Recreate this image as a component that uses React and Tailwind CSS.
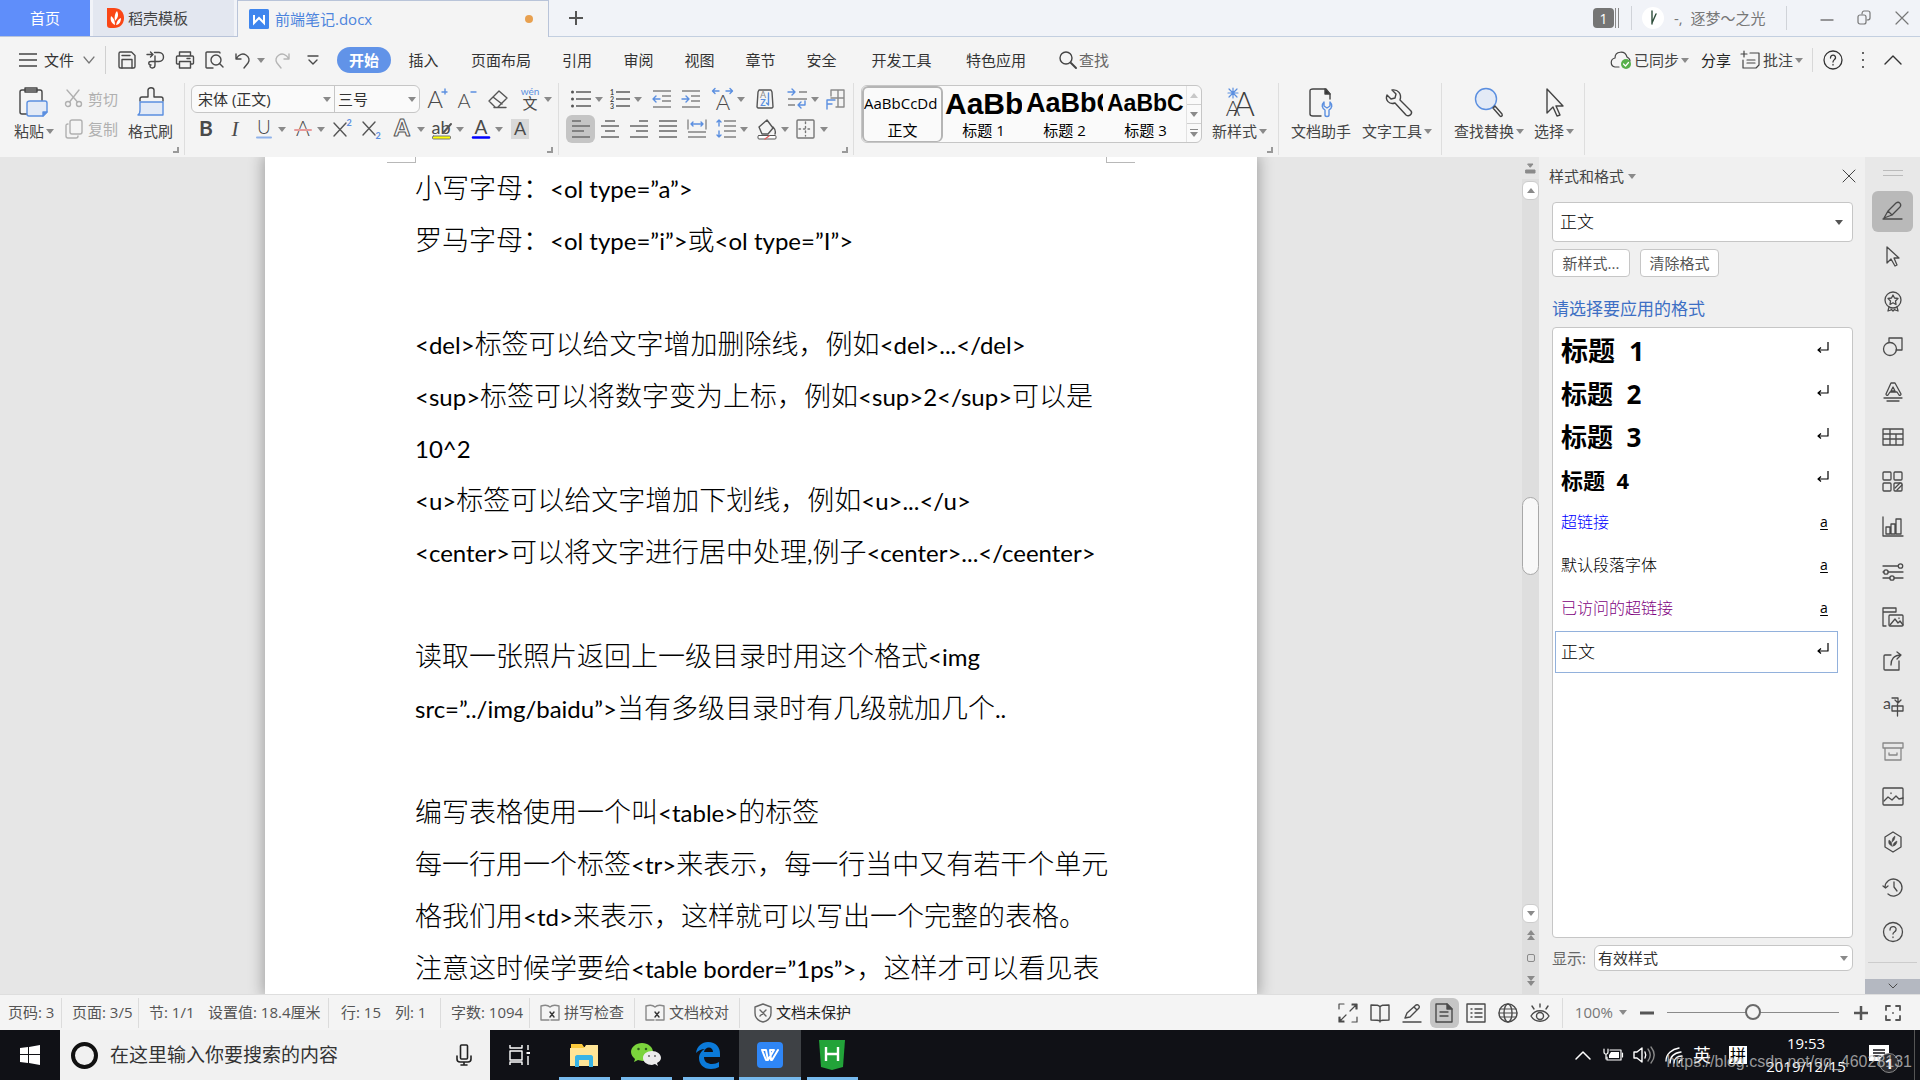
import React from "react";

/* ---------- drawing helpers ---------- */

function Svg({ w = 22, h = 22, sw = 1.4, children, className = "" }) {
  return (
    <svg
      width={w}
      height={h}
      viewBox={`0 0 ${w} ${h}`}
      fill="none"
      stroke="currentColor"
      strokeWidth={sw}
      strokeLinecap="round"
      strokeLinejoin="round"
      className={"shrink-0 overflow-visible " + className}
      aria-hidden="true"
    >
      {children}
    </svg>
  );
}

function Caret({ className = "text-[#8a8a8a]" }) {
  return (
    <svg width="8" height="5" viewBox="0 0 8 5" className={"shrink-0 " + className} aria-hidden="true">
      <path d="M0 0h8L4 5z" fill="currentColor" />
    </svg>
  );
}

const BLUE = "#5b8fe0";
const GREY = "#8a8a8a";

function Letter({ x, y, size, children, fill = "#4a4a4a", weight = 300, font = "Lato", ...rest }) {
  return (
    <text x={x} y={y} fontSize={size} fill={fill} fontWeight={weight} fontFamily={`${font}, sans-serif`} textAnchor="middle" stroke="none" {...rest}>
      {children}
    </text>
  );
}

function Lines({ rows, color = GREY }) {
  return rows.map(([x1, x2, y]) => <path key={y} d={`M${x1} ${y}H${x2}`} stroke={color} strokeWidth="1.6" strokeLinecap="butt" />);
}

/* ---------- title bar ---------- */

function TitleBar() {
  return (
    <header className="flex h-[37px] shrink-0 bg-[#f1f3f8] text-[15px]">
      <button className="w-[90px] border-b border-[#b9c4d9] bg-[#5f8efa] text-white">首页</button>
      <div className="w-[3px] border-b border-[#b9c4d9]" />
      <button className="flex w-[141px] items-center gap-1 border-b border-[#b9c4d9] bg-[#e3e7f0] pl-3.5 text-[#444]">
        <Svg w={17} h={24} className="text-white">
          <path d="M0 2h7c6 0 10 4 10 10s-4 10-10 10H3c-2 0-3-1-3-3z" fill="#fa4616" stroke="none" />
          <path d="M8 19c-4-2-5-5-4-9 3 2 4 5 4 9zM8 15c-1-4 0-8 2-10 2 4 1 7-2 10zM9 19c1-4 2-6 5-7 0 4-2 7-5 7z" fill="#fff" stroke="none" />
        </Svg>
        稻壳模板
      </button>
      <div className="w-[3px] border-b border-[#b9c4d9]" />
      <button className="flex w-[312px] items-center gap-1.5 border-x border-t border-[#b9c4d9] bg-[#f4f4f4] pl-[11px] pr-[15px] text-[#4d84dd]">
        <Svg w={20} h={24} sw={2} className="text-white">
          <rect x="0" y="2" width="20" height="20" rx="1.5" fill="#3f86ee" stroke="none" />
          <path d="M5 8v8l5-5 5 5V8" strokeLinejoin="miter" strokeLinecap="butt" />
        </Svg>
        <span className="flex-1 text-left">前端笔记.docx</span>
        <span className="size-2 rounded-full bg-[#e8a04f]" />
      </button>
      <div className="flex flex-1 items-center border-b border-[#c3cfe0] text-[#777]">
        <button className="ml-5" aria-label="新建标签">
          <Svg w={14} h={14} sw={2} className="text-[#555]">
            <path d="M7 0v14M0 7h14" strokeLinecap="butt" />
          </Svg>
        </button>
        <div className="flex-1" />
        <span className="flex h-5 w-[21px] items-center justify-center rounded-sm bg-[#757575] text-[14px] text-white">1</span>
        <span className="ml-px h-5 w-1 border-x border-[#888]" />
        <span className="ml-3 h-6 w-px bg-[#d0d3d9]" />
        <span className="ml-2.5 flex size-[22px] items-center justify-center rounded-full bg-white">
          <Svg w={10} h={14} className="text-[#2d4d3a]">
            <path d="M4 0v13M4 12l4-9" />
          </Svg>
        </span>
        <span className="ml-2.5 w-[106px] whitespace-pre">-,&nbsp; 逐梦～之光</span>
        <span className="ml-1.5 h-6 w-px bg-[#d0d3d9]" />
        <button className="ml-[33px]" aria-label="最小化">
          <Svg w={14} h={14}><path d="M1 9h12" /></Svg>
        </button>
        <button className="ml-[23px]" aria-label="还原">
          <Svg w={14} h={16} sw={1.2}>
            <rect x="1" y="5" width="8" height="9" rx="2" />
            <path d="M5 4c0-2 1-3 2-3h4c1 0 2 1 2 2v5c0 2-1 2-3 2" />
          </Svg>
        </button>
        <button className="ml-6 mr-[11px]" aria-label="关闭">
          <Svg w={14} h={14} sw={1.2}><path d="M1 1l12 12M13 1L1 13" /></Svg>
        </button>
      </div>
    </header>
  );
}

/* ---------- menu row ---------- */

const menus = [
  ["插入", "w-[65px]"],
  ["页面布局", "w-[90px]"],
  ["引用", "w-[62px]"],
  ["审阅", "w-[61px]"],
  ["视图", "w-[61px]"],
  ["章节", "w-[61px]"],
  ["安全", "w-[61px]"],
  ["开发工具", "w-[99px]"],
  ["特色应用", "w-[90px]"],
];

function MenuRow() {
  return (
    <nav className="flex h-[46px] shrink-0 items-center text-[15px] text-[#333]">
      <button className="ml-[19px] flex items-center gap-[7px]">
        <Svg w={18} h={16} className="text-[#444]"><path d="M0 2h18M0 8h18M0 14h18" strokeLinecap="butt" /></Svg>
        文件
        <Svg w={12} h={8} sw={1.2} className="ml-0.5 text-[#777]"><path d="M1 1l5 6 5-6" /></Svg>
      </button>
      <span className="ml-2.5 h-7 w-px bg-[#d0d0d0]" />
      <div className="ml-1.5 flex items-center text-[#4a4a4a]">
        <button className="flex w-[29px] justify-center" aria-label="保存">
          <Svg w={20} h={20}>
            <path d="M2 3.500c0-1 .5-1.500 1.500-1.500h11L18 5.500v11c0 1-.5 1.500-1.500 1.500h-13C2.500 18 2 17.500 2 16.500z" />
            <path d="M5 18v-8.500h10V18M5 5.500h8" />
          </Svg>
        </button>
        <button className="flex w-[29px] justify-center" aria-label="输出为PDF">
          <Svg w={20} h={20}>
            <path d="M1 4.500h6M4.500 2L7 4.500 4.500 7M8.500 2.500H13c6 0 6 9 0 9H5c-3 0-3 3.500 0 3.500M9 6v9c0 4-5 3.500-5 1" />
          </Svg>
        </button>
        <button className="flex w-[29px] justify-center" aria-label="打印">
          <Svg w={20} h={20}>
            <path d="M4.500 6V2h11v4M4.500 14H2.500c-1 0-1-.5-1-1V7c0-1 .5-1 1-1h15c1 0 1 .5 1 1v6c0 .5 0 1-1 1h-2M4.500 11.500h11v6.500h-11zM12 8.500h3" />
          </Svg>
        </button>
        <button className="flex w-[29px] justify-center" aria-label="打印预览">
          <Svg w={20} h={20}>
            <path d="M9 18H3c-1 0-1-.5-1-1V3c0-.5.5-1 1-1h12c.5 0 1 .5 1 1" />
            <circle cx="12" cy="10" r="5" />
            <path d="M15.500 13.500L19 17" />
          </Svg>
        </button>
        <button className="flex w-[29px] justify-center" aria-label="撤销">
          <Svg w={20} h={20}><path d="M3 4v5h5M3 9c3-5 7-6 10-4s4 5 2 8l-4 5" /></Svg>
        </button>
        <button className="flex w-2.5" aria-label="撤销列表"><Caret /></button>
        <button className="flex w-[29px] justify-center text-[#b5b5b5]" aria-label="恢复">
          <Svg w={20} h={20}><path d="M17 4v5h-5M17 9c-3-5-7-6-10-4S3 10 5 13l4 5" /></Svg>
        </button>
        <button className="ml-0.5 flex w-[29px] justify-center" aria-label="自定义快速访问">
          <Svg w={12} h={12}><path d="M1 2h10M2 6l4 4 4-4" /></Svg>
        </button>
      </div>
      <button className="ml-2.5 h-[26px] w-[54px] rounded-full bg-[#6193e8] font-bold text-white">开始</button>
      {menus.map(([name, w]) => (
        <button key={name} className={"text-center " + w}>{name}</button>
      ))}
      <button className="ml-[18px] flex items-center gap-0.5 text-[#666]">
        <Svg w={18} h={20} className="text-[#444]"><circle cx="7" cy="8" r="6" /><path d="M12 13l5 5" strokeWidth="2" /></Svg>
        查找
      </button>
      <div className="flex-1" />
      <button className="flex items-center gap-0.5 text-[#444]">
        <Svg w={22} h={20} sw={1.2}>
          <path d="M9 17H5c-5-1-5-8 0-9 0-7 10-8 12-1 2 1 3 2 3 4" />
          <circle cx="16" cy="14" r="5" fill="#57b04a" stroke="none" />
          <path d="M13.500 14l2 2 3-3.500" stroke="#fff" />
        </Svg>
        已同步 <Caret />
      </button>
      <button className="ml-3 text-[#222]">分享</button>
      <button className="ml-2.5 mr-0.5 flex items-center gap-0.5 text-[#444]">
        <Svg w={20} h={20} sw={1.2}>
          <path d="M3 1v6M0 4h6M9 3h9v12l-3 3H2V10M6 10h8M6 13h8" />
        </Svg>
        批注 <Caret />
      </button>
      <span className="ml-[7px] h-6 w-px bg-[#d8d8d8]" />
      <button className="ml-2.5" aria-label="帮助">
        <Svg w={20} h={20} sw={1.300}>
          <circle cx="10" cy="10" r="9" />
          <path d="M7.500 8c0-4 5.500-3.500 5 0-.3 1.500-2.500 2-2.500 4M10 14.500v.5" />
        </Svg>
      </button>
      <button className="ml-[18px]" aria-label="更多">
        <Svg w={4} h={18} sw={2}><path d="M2 2v.1M2 9v.1M2 16v.1" /></Svg>
      </button>
      <button className="ml-[19px] mr-[18px]" aria-label="折叠功能区">
        <Svg w={18} h={12}><path d="M1 10l8-8 8 8" /></Svg>
      </button>
    </nav>
  );
}

/* ---------- ribbon ---------- */

function Tool({ label, drop, active, children, className = "" }) {
  return (
    <button className={"flex h-7 shrink-0 items-center text-[#555] " + className} aria-label={label}>
      <span className={"flex h-7 w-[29px] items-center justify-center rounded-md " + (active ? "bg-[#c5c5c5]" : "")}>{children}</span>
      {drop && <span className="flex w-2.5"><Caret /></span>}
    </button>
  );
}

function Group({ children, corner, className = "" }) {
  return (
    <div className={"relative flex h-[72px] shrink-0 border-r border-[#dedede] " + className}>
      {children}
      {corner && (
        <svg width="6" height="6" viewBox="0 0 6 6" className="absolute bottom-0.5 right-[5px]" aria-hidden="true">
          <path d="M5 0v5H0" fill="none" stroke="#999" strokeWidth="2" />
        </svg>
      )}
    </div>
  );
}

function BigTool({ icon, label, drop, className = "" }) {
  return (
    <button className={"flex shrink-0 flex-col items-center pt-1 text-[15px] text-[#444] " + className}>
      {icon}
      <span className="flex h-6 items-center gap-0.5 whitespace-nowrap">{label}{drop && <Caret />}</span>
    </button>
  );
}

function FontGroup() {
  return (
    <Group corner className="w-[374px] flex-col gap-0.5 pl-1.5 pt-0.5">
      <div className="flex">
        <div className="mr-0.5 flex h-7 w-[229px] items-center rounded-md border border-[#c6c6c6] bg-[#fafafa] text-[15px] text-[#333]">
          <div className="relative flex h-full w-[143px] items-center border-r border-[#c6c6c6]">
            <select aria-label="字体" className="h-full w-full appearance-none bg-transparent pl-1.5">
              <option>宋体 (正文)</option>
            </select>
            <Caret className="absolute right-[3px] text-[#8a8a8a]" />
          </div>
          <div className="relative flex h-full flex-1 items-center">
            <select aria-label="字号" className="h-full w-full appearance-none bg-transparent pl-[3px]">
              <option>三号</option>
            </select>
            <Caret className="absolute right-[3px] text-[#8a8a8a]" />
          </div>
        </div>
        <Tool label="增大字号">
          <Svg w={24} h={24}><Letter x={10} y={21} size={24}>A</Letter><path d="M20 2v5M17 5h5" stroke={BLUE} /></Svg>
        </Tool>
        <Tool label="减小字号">
          <Svg w={24} h={24}><Letter x={10} y={21} size={20}>A</Letter><path d="M17 5h5" stroke={BLUE} /></Svg>
        </Tool>
        <Tool label="清除格式" className="ml-[3px]">
          <Svg w={22} h={22}><path d="M8 19l-6-6L12 3l8 7-9 9M6 9l9 7M7 19.500h12" /></Svg>
        </Tool>
        <Tool label="拼音指南" drop className="ml-[3px]">
          <Svg w={24} h={26}>
            <Letter x={12} y={9} size={10} fill={BLUE} weight={400}>wén</Letter>
            <Letter x={12} y={23} size={15} font="Noto Sans CJK SC" weight={400}>文</Letter>
          </Svg>
        </Tool>
      </div>
      <div className="flex">
        <Tool label="加粗"><Svg w={20} h={24}><Letter x={10} y={19} size={21} weight={700}>B</Letter></Svg></Tool>
        <Tool label="倾斜"><Svg w={20} h={24}><Letter x={10} y={19} size={21} font="Liberation Serif" weight={400} fontStyle="italic">I</Letter></Svg></Tool>
        <Tool label="下划线" drop>
          <Svg w={20} h={24}><Letter x={10} y={17} size={19}>U</Letter><path d="M3 20.500h14" stroke="#8fb2ea" strokeWidth="2" /></Svg>
        </Tool>
        <Tool label="删除线" drop>
          <Svg w={20} h={24}><Letter x={10} y={19} size={21}>A</Letter><path d="M2 13h16" stroke="#e79a9a" strokeWidth="2" /></Svg>
        </Tool>
        <Tool label="上标">
          <Svg w={22} h={24}><path d="M3 6l12 13M15 6L3 19" /><Letter x={18} y={9} size={9} fill={BLUE} weight={700}>2</Letter></Svg>
        </Tool>
        <Tool label="下标">
          <Svg w={22} h={24}><path d="M3 5l12 13M15 5L3 18" /><Letter x={18} y={22} size={9} fill={BLUE} weight={700}>2</Letter></Svg>
        </Tool>
        <Tool label="文字效果" drop className="ml-[3px]">
          <Svg w={22} h={24}>
            <Letter x={10} y={19} size={22} weight={900} fill="none" style={{ stroke: "#555", strokeWidth: 1 }}>A</Letter>
          </Svg>
        </Tool>
        <Tool label="突出显示" drop>
          <Svg w={24} h={26}>
            <Letter x={11} y={18} size={18} weight={400}>ab</Letter>
            <path d="M13 17l8-9" strokeWidth="2" />
            <rect x="2.500" y="20" width="18" height="3" rx="1" fill="#ffff00" stroke="#777" strokeWidth="1" />
          </Svg>
        </Tool>
        <Tool label="字体颜色" drop>
          <Svg w={22} h={26}>
            <Letter x={11} y={18} size={19} weight={400}>A</Letter>
            <path d="M3 21.500h16" stroke="#0000ff" strokeWidth="2.500" />
          </Svg>
        </Tool>
        <Tool label="字符底纹">
          <Svg w={18} h={20}><rect width="18" height="20" fill="#d9d9d9" stroke="none" /><Letter x={9} y={16} size={18} weight={400}>A</Letter></Svg>
        </Tool>
      </div>
    </Group>
  );
}

function AlignIcon({ rows }) {
  return <Svg w={20} h={20}><Lines rows={rows} color="#707070" /></Svg>;
}

function ParagraphGroup() {
  return (
    <Group corner className="w-[295px] flex-col gap-0.5 pl-[7px] pt-0.5">
      <div className="flex">
        <Tool label="项目符号" drop>
          <Svg w={20} h={20}>
            <Lines rows={[[5, 20, 3], [5, 20, 10], [5, 20, 17]]} color="#666" />
            <path d="M1.500 3v.1M1.500 10v.1M1.500 17v.1" strokeWidth="3" />
          </Svg>
        </Tool>
        <Tool label="编号" drop>
          <Svg w={20} h={20}>
            <Lines rows={[[6, 20, 3], [6, 20, 10], [6, 20, 17]]} color="#666" />
            <Letter x={2} y={6} size={7} weight={700}>1</Letter>
            <Letter x={2} y={13} size={7} weight={700}>2</Letter>
            <Letter x={2} y={20} size={7} weight={700}>3</Letter>
          </Svg>
        </Tool>
        <Tool label="减少缩进" className="ml-[3px]">
          <Svg w={20} h={20}>
            <Lines rows={[[1, 19, 2], [10, 19, 7], [10, 19, 12], [1, 19, 18]]} />
            <path d="M8 10H1M4 7l-3 3 3 3" stroke={BLUE} />
          </Svg>
        </Tool>
        <Tool label="增加缩进">
          <Svg w={20} h={20}>
            <Lines rows={[[1, 19, 2], [10, 19, 7], [10, 19, 12], [1, 19, 18]]} />
            <path d="M1 10h7M5 7l3 3-3 3" stroke={BLUE} />
          </Svg>
        </Tool>
        <Tool label="中文版式" drop className="ml-[3px]">
          <Svg w={24} h={24}>
            <Letter x={12} y={23} size={22}>A</Letter>
            <path d="M8 4H2M4 1.500L1.500 4 4 6.500M15 4h6M19 1.500L21.500 4 19 6.500" stroke={BLUE} />
          </Svg>
        </Tool>
        <Tool label="排序" className="ml-[3px]">
          <Svg w={20} h={22}>
            <path d="M4 2h12l1 2 1 15-1 1H3l-1-1L3 4z" />
            <Letter x={8} y={10} size={9} fill={GREY} weight={400}>A</Letter>
            <Letter x={8} y={18} size={9} fill={BLUE} weight={700}>Z</Letter>
            <path d="M13.500 5v12M11.500 15l2 2" stroke={BLUE} />
          </Svg>
        </Tool>
        <Tool label="换行" drop className="ml-[3px]">
          <Svg w={20} h={20}>
            <Lines rows={[[12, 20, 3], [1, 20, 10], [1, 8, 16]]} />
            <path d="M1 3h7M5 0l3 3-3 3M18 12v4h-7M14 13l-3 3 3 3" stroke={BLUE} />
          </Svg>
        </Tool>
        <Tool label="显示标记">
          <Svg w={20} h={22}>
            <path d="M5 8V2h13v17h-8M5 10h13M12 2v17" stroke={GREY} />
            <path d="M1 21v-9h8M1 16h5" stroke={BLUE} />
          </Svg>
        </Tool>
      </div>
      <div className="flex">
        <Tool label="左对齐" active><AlignIcon rows={[[1, 10, 2], [1, 19, 7], [1, 13, 12], [1, 19, 18]]} /></Tool>
        <Tool label="居中"><AlignIcon rows={[[5, 15, 2], [1, 19, 7], [5, 15, 12], [1, 19, 18]]} /></Tool>
        <Tool label="右对齐"><AlignIcon rows={[[10, 19, 2], [1, 19, 7], [7, 19, 12], [1, 19, 18]]} /></Tool>
        <Tool label="两端对齐"><AlignIcon rows={[[1, 19, 2], [1, 19, 7], [1, 19, 12], [1, 19, 18]]} /></Tool>
        <Tool label="分散对齐">
          <Svg w={20} h={20}>
            <Lines rows={[[1, 19, 13], [1, 19, 18]]} />
            <path d="M1 1v9M19 1v9" stroke={GREY} />
            <path d="M4 5h12M6 3L4 5l2 2M14 3l2 2-2 2" stroke={BLUE} />
          </Svg>
        </Tool>
        <Tool label="行距" drop>
          <Svg w={20} h={20}>
            <Lines rows={[[8, 20, 2], [8, 20, 7], [8, 20, 12], [8, 20, 18]]} />
            <path d="M3 1v6M1 3l2-2 2 2M3 12v6M1 16l2 2 2-2" stroke={BLUE} />
          </Svg>
        </Tool>
        <Tool label="底纹颜色" drop className="ml-0.5">
          <Svg w={22} h={22}>
            <path d="M3 9l8-7 6 8-5 6H6zM17 9c2 2 3 4 2 7" />
            <rect x="2" y="17.500" width="18" height="3.500" rx="1" fill="#fff" strokeWidth="1" />
            <path d="M9 21l4-3" stroke="#e06060" />
          </Svg>
        </Tool>
        <Tool label="边框" drop>
          <Svg w={20} h={20}>
            <rect x="1" y="1" width="17" height="18" rx="1" stroke="#777" />
            <path d="M9.500 3v14M3 10h13" strokeDasharray="1.500 3" stroke="#777" />
          </Svg>
        </Tool>
      </div>
    </Group>
  );
}

const gallery = [
  ["正文", "text-[15px]"],
  ["标题 1", "text-[30px] font-bold font-['Liberation_Sans']"],
  ["标题 2", "text-[27px] font-bold font-['Liberation_Sans']"],
  ["标题 3", "text-[23px] font-bold font-['Liberation_Sans']"],
];

function StylesGroup() {
  return (
    <Group corner className="w-[425px] pl-[7px]">
      <div className="mt-0.5 flex h-[58px] w-[341px] shrink-0 rounded-md border border-[#c6c6c6] bg-[#fafafa]">
        {gallery.map(([name, cls], i) => (
          <button
            key={name}
            className={"flex h-full w-[81px] flex-col items-center justify-end overflow-hidden rounded-md text-black " + (i === 0 ? "border-2 border-b border-[#b5b5b5]" : "px-0.5 pb-px")}
          >
            <span className={"flex h-8 w-full items-center overflow-hidden whitespace-nowrap " + cls}>AaBbCcDd</span>
            <span className="flex h-[22px] items-center text-[15px]">{name}</span>
          </button>
        ))}
        <div className="flex flex-1 flex-col divide-y divide-[#d0d0d0] border-l border-[#e2e2e2]">
          <button className="flex flex-1 items-center justify-center" aria-label="上一行"><Caret className="rotate-180 text-[#c8c8c8]" /></button>
          <button className="flex flex-1 items-center justify-center" aria-label="下一行"><Caret /></button>
          <button className="flex flex-1 flex-col items-center justify-center gap-0.5" aria-label="更多样式">
            <span className="h-px w-2 bg-[#8a8a8a]" />
            <Caret />
          </button>
        </div>
      </div>
      <BigTool
        className="ml-2.5"
        label="新样式"
        drop
        icon={
          <Svg w={30} h={32} className="text-[#3f3f3f]">
            <Letter x={8} y={29} size={22} fill="#3f3f3f">A</Letter>
            <Letter x={19} y={29} size={33} fill="#3f3f3f">A</Letter>
            <path d="M8 1v10M4 2l8 8M12 2l-8 8M3 6h10" stroke={BLUE} strokeWidth="1.200" />
          </Svg>
        }
      />
    </Group>
  );
}

function Ribbon() {
  return (
    <section className="flex h-[74px] shrink-0 overflow-hidden bg-[#f4f4f4]">
      <Group corner className="w-[185px] pl-3.5">
        <BigTool
          label="粘贴"
          drop
          icon={
            <Svg w={32} h={32}>
              <path d="M10 27H4c-1 0-2-1-2-2V5c0-1 1-2 2-2h18c1 0 2 1 2 2v10" />
              <path d="M7 1h12v4H7z" />
              <path d="M12 14h15c1 0 2 1 2 2v9l-4 4H11c-1 0-2-1-2-2V16c0-1 1-2 3-2z" fill="#e3eaf6" stroke={BLUE} />
              <path d="M29 25h-4v4z" fill={BLUE} stroke={BLUE} />
            </Svg>
          }
        />
        <div className="ml-2.5 flex flex-col gap-0.5 pt-0.5 text-[15px] text-[#b0b0b0]">
          <button className="flex h-7 items-center gap-1">
            <Svg w={20} h={20}>
              <circle cx="4" cy="15" r="2.500" /><circle cx="15" cy="15" r="2.500" />
              <path d="M5.500 13L15 1M13.500 13L3 1" />
            </Svg>
            剪切
          </button>
          <button className="flex h-7 items-center gap-1">
            <Svg w={20} h={20}>
              <rect x="6" y="1" width="12" height="14" rx="2" /><path d="M4 5c-2 0-2 1-2 2v10c0 1 1 2 2 2h8c2 0 2-1 2-2" />
            </Svg>
            复制
          </button>
        </div>
        <BigTool
          className="ml-2.5"
          label="格式刷"
          icon={
            <Svg w={28} h={32}>
              <path d="M3 14v-2c0-2 1-2 2-2h6V3c0-3 6-3 6 0v7h7c1 0 2 0 2 2v2" />
              <path d="M3 15h23v13H1c2-1 2-3 2-5z" fill="#e3eaf6" stroke={BLUE} />
            </Svg>
          }
        />
      </Group>
      <FontGroup />
      <ParagraphGroup />
      <StylesGroup />
      <Group className="w-[163px] pl-3">
        <BigTool
          label="文档助手"
          icon={
            <Svg w={26} h={32}>
              <path d="M13 29H5c-2 0-3-1-3-2V4c0-2 1-2 3-2h13l4 5v5" />
              <path d="M17 2v5h5z" fill="#333" />
              <path d="M16 15c-3 3-2 6 1 8v5c0 2 4 2 4 0v-5c3-2 4-5 1-8v4l-3 2-3-2z" stroke={BLUE} />
            </Svg>
          }
        />
        <BigTool
          className="ml-[11px]"
          label="文字工具"
          drop
          icon={
            <Svg w={26} h={32}>
              <path d="M8 3l4 4-1 4-4 1-4-4c-2 5 2 10 8 8l11 12c3 2 7-1 5-4L16 13c2-6-2-11-8-10z" />
            </Svg>
          }
        />
      </Group>
      <Group className="w-[143px] pl-3">
        <BigTool
          label="查找替换"
          drop
          icon={
            <Svg w={30} h={32}>
              <circle cx="12" cy="12" r="10.500" fill="#e3eaf6" stroke={BLUE} />
              <path d="M19 21l2-2 7 8c1 2-1 3-2 2z" />
            </Svg>
          }
        />
        <BigTool
          className="ml-2.5"
          label="选择"
          drop
          icon={
            <Svg w={24} h={32}>
              <path d="M5 2v24l6-6 4 9 3-1-4-9h7z" />
            </Svg>
          }
        />
      </Group>
    </section>
  );
}

/* ---------- document ---------- */

const paragraphs = [
  "小写字母：<ol type=”a”>",
  "罗马字母：<ol type=”i”>或<ol type=”I”>",
  "",
  "<del>标签可以给文字增加删除线，例如<del>...</del>",
  "<sup>标签可以将数字变为上标，例如<sup>2</sup>可以是",
  "10^2",
  "<u>标签可以给文字增加下划线，例如<u>...</u>",
  "<center>可以将文字进行居中处理,例子<center>...</ceenter>",
  "",
  "读取一张照片返回上一级目录时用这个格式<img",
  "src=”../img/baidu”>当有多级目录时有几级就加几个..",
  "",
  "编写表格使用一个叫<table>的标签",
  "每一行用一个标签<tr>来表示，每一行当中又有若干个单元",
  "格我们用<td>来表示，这样就可以写出一个完整的表格。",
  "注意这时候学要给<table border=”1ps”>，这样才可以看见表",
];

/* Latin runs are smaller and heavier than the Chinese text around them. */
function Mixed({ text }) {
  return text.split(/([\x20-\x7e”]+)/).map((run, i) =>
    i % 2 ? <span key={i} className="font-['Lato'] text-[24px] font-normal">{run}</span> : run
  );
}

function Document() {
  return (
    <main className="min-w-0 flex-1 overflow-hidden bg-[#e6e6e6]">
      <article className="mx-auto h-full w-[992px] overflow-hidden bg-white shadow-[0_0_14px_2px_rgba(0,0,0,0.3)]">
        <div className="flex h-[5px] justify-between px-[122px]">
          <span className="h-1.5 w-[29px] shrink-0 border-b border-r border-[#b8b8b8]" />
          <span className="h-1.5 w-[29px] shrink-0 border-b border-l border-[#b8b8b8]" />
        </div>
        <div className="whitespace-nowrap pl-[150px] text-[27px] font-light text-black">
          {paragraphs.map((p, i) => (
            <p key={i} className="h-[52px] leading-[52px]"><Mixed text={p} /></p>
          ))}
        </div>
      </article>
    </main>
  );
}

function ScrollColumn() {
  return (
    <div className="flex w-[17px] shrink-0 flex-col items-center bg-[#dedede] text-[#8a8a8a]">
      <div className="flex h-[22px] w-full items-center justify-center bg-[#e6e6e6]">
        <Svg w={11} h={12} sw={1}><path d="M3 2h5L5.500 5zM1 8h9v3H1z" fill="currentColor" /></Svg>
      </div>
      <button className="mt-0.5 flex h-[19px] w-full items-center justify-center rounded-md border border-[#ccc] bg-white" aria-label="向上滚动"><Caret className="rotate-180" /></button>
      <div className="grow-[297]" />
      <div className="h-[78px] w-full rounded-full border border-[#a8a8a8] bg-[#f8f8f8]" />
      <div className="grow-[330]" />
      <button className="flex h-[19px] w-full items-center justify-center rounded-md border border-[#ccc] bg-white" aria-label="向下滚动"><Caret /></button>
      <button className="flex h-[23px] flex-col items-center justify-center" aria-label="上一页"><Caret className="rotate-180" /><Caret className="rotate-180" /></button>
      <button className="flex h-[23px] items-center justify-center" aria-label="选择浏览对象"><span className="size-2 rounded-xs border border-[#8a8a8a]" /></button>
      <button className="mb-0.5 flex h-[23px] flex-col items-center justify-center" aria-label="下一页"><Caret /><Caret /></button>
    </div>
  );
}

/* ---------- styles panel ---------- */

const styleItems = [
  ["标题 1", "text-[27px] font-bold", "p"],
  ["标题 2", "text-[26px] font-bold", "p"],
  ["标题 3", "text-[26px] font-bold", "p"],
  ["标题 4", "text-[22px] font-bold", "p"],
  ["超链接", "text-[16px] font-light text-[#0000ff]", "a"],
  ["默认段落字体", "text-[16px] font-light", "a"],
  ["已访问的超链接", "text-[16px] font-light text-[#800080]", "a"],
];

function Mark({ kind }) {
  return kind === "a" ? (
    <span className="w-2.5 text-center text-[14px] underline underline-offset-2 font-['Open_Sans']">a</span>
  ) : (
    <Svg w={12} h={11} sw={1.2} className="mb-2"><path d="M11 0v8H1M4 5.500L1 8l3 2.500" strokeLinecap="butt" /></Svg>
  );
}

function StylesPanel() {
  return (
    <aside className="flex w-[326px] shrink-0 flex-col bg-[#f0f0f0] pb-[23px] pl-[13px] pr-3 text-[15px] text-[#444]">
      <div className="-ml-[3px] flex h-[38px] items-center">
        <button className="flex items-center gap-1">样式和格式 <Caret /></button>
        <div className="flex-1" />
        <button aria-label="关闭窗格" className="-mr-1.5 px-1"><Svg w={12} h={12} sw={1}><path d="M0 0l12 12M12 0L0 12" /></Svg></button>
      </div>
      <div className="relative mt-[7px] flex h-10 shrink-0 items-center rounded-sm border border-[#c6c6c6] bg-white text-[17px] font-light text-black">
        <select aria-label="当前样式" className="h-full w-full appearance-none bg-transparent pl-[7px]"><option>正文</option></select>
        <Caret className="absolute right-[9px] text-[#555]" />
      </div>
      <div className="mt-[7px] flex gap-2.5">
        <button className="h-7 w-[78px] rounded-sm border border-[#c6c6c6] bg-white text-[#555]">新样式...</button>
        <button className="h-7 w-[79px] rounded-sm border border-[#c6c6c6] bg-white text-[#555]">清除格式</button>
      </div>
      <h2 className="mt-4 h-[33px] text-[17px] leading-8 text-[#3d6fc4]">请选择要应用的格式</h2>
      <ul className="mt-px min-h-0 flex-1 rounded-sm border border-[#c6c6c6] bg-white pt-0.5 text-black">
        {styleItems.map(([name, cls, kind]) => (
          <li key={name} className={"flex h-[43px] items-center justify-between pl-2 pr-[23px] " + (kind === "a" ? "pb-1" : "")}>
            <span className={"whitespace-pre " + cls}>{name.replace(" ", "  ")}</span>
            <Mark kind={kind} />
          </li>
        ))}
        <li className="ml-0.5 mr-3.5 flex h-[42px] items-center justify-between border border-[#92b1dc] pl-[5px] pr-2">
          <span className="text-[17px] font-light">正文</span>
          <Mark kind="p" />
        </li>
      </ul>
      <div className="mt-[7px] flex h-[26px] shrink-0 items-center gap-2 text-[#666]">
        <label htmlFor="show">显示:</label>
        <div className="relative flex h-full flex-1 items-center rounded-md border border-[#c6c6c6] bg-white">
          <select id="show" className="h-full w-full appearance-none bg-transparent pl-[3px] text-[#333]"><option>有效样式</option></select>
          <Caret className="absolute right-1 text-[#8a8a8a]" />
        </div>
      </div>
    </aside>
  );
}

/* ---------- right tool strip ---------- */

const strip = [
  ["样式", <path d="M1 18h19M2 17l4-7 8-8c3-2 6 1 4 4l-8 8zM6 10l4 4" />],
  ["选择", <path d="M5 1v16l4-4 4 7 2-1-3-7h5z" />],
  ["推荐", <g><circle cx="11" cy="9" r="8" /><path d="M11 4l1.500 3 3.500.5-2.500 2.500.5 3.500-3-1.700L8 13.500l.5-3.500L6 7.500 9.500 7zM7 16l-1 4 3-1M15 16l1 4-3-1M9 18l2 2 2-2" /></g>],
  ["形状", <g><path d="M7 6V2h13v12h-6" /><circle cx="8" cy="13" r="6.500" /></g>],
  ["艺术字", <g><path d="M9 2h4l6 11c0 1-1 2-2 1l-2-3H8l-2 3c-1 1-2 0-2-1zM11 6l-2 4h4zM2 17h18M5 20h12" /></g>],
  ["表格", <path d="M1 3h20v16H1zM1 8h20M1 13h20M8 3v16M14 8v11" />],
  ["图库", <g><rect x="1" y="1" width="8" height="8" rx="1" /><rect x="12" y="1" width="8" height="8" rx="1" /><rect x="1" y="12" width="8" height="8" rx="1" /><rect x="12" y="12" width="8" height="8" rx="1" /><path d="M13 17l5-5M15 19l5-5" /></g>],
  ["图表", <path d="M1 1v19h20M4 18v-7h4v7zM9 18V8h4v10zM14 18V3h5v15z" />],
  ["设置", <g><path d="M1 5h15M1 11h1M6 11h15M1 17h7M12 17h9" /><circle cx="18.500" cy="5" r="2.200" /><circle cx="4" cy="11" r="2.200" /><circle cx="10" cy="17" r="2.200" /></g>],
  ["图片集", <g><path d="M4 20H1V2h13v4M1 6h13" /><rect x="7" y="9" width="14" height="11" rx="1" /><path d="M8 19l5-6 3 4 2-2 3 4M17 12v.5" /></g>],
  ["分享", <path d="M9 4H3c-1 0-1 1-1 1v13c0 1 1 1 1 1h14v-9M9 14c0-6 3-10 10-10M15 1l4 3-4 4" />],
  ["翻译", <g><Letter x={5} y={13} size={16} weight={400}>a</Letter><path d="M10 2h6v4M13 4l3 3 3-3M10 10h11v5H10zM15.500 8v12" /></g>],
  ["归档", <g className="text-[#888]"><path d="M1 2h20v5H1zM3 7v12h16V7M7 12v2h8v-2" /></g>],
  ["图片", <g><rect x="1" y="2" width="20" height="17" rx="1" /><path d="M2 15l4-4 4 3 4-4 3 3 4-1M9 7v.5" /></g>],
  ["稻壳", <g><path d="M11 1l8 5v10l-8 5-8-5V6z" /><path d="M10 15c-3-1-4-3-3-6 2 1 3 3 3 6zM10 11c0-3 1-5 3-6 0 3-1 5-3 6zM11 15c0-3 2-4 4-5 0 3-2 5-4 5z" fill="currentColor" strokeWidth=".5" /></g>],
  ["历史", <g><path d="M3 11a8.500 8.500 0 1 1 3 7M1 10l2.500 2L6 10M12 6v5l3 4" /></g>],
  ["帮助", <g><circle cx="11" cy="11" r="9.500" /><path d="M8 9c0-5 7-4 6 0-.5 2-3 2-3 4M11 16v.5" /></g>],
];

function ToolStrip() {
  return (
    <div className="flex w-[55px] shrink-0 flex-col items-center bg-[#e8e8e8] text-[#4a4a4a]">
      <div className="mb-[15px] mt-[13px] h-1.5 w-5 border-y border-[#bbb]" />
      {strip.map(([name, art], i) => (
        <button
          key={name}
          aria-label={name}
          className={"mb-1 flex h-[41px] w-[41px] items-center justify-center rounded-md " + (i === 0 ? "bg-[#b9b9b9]" : "")}
        >
          <Svg w={22} h={22} sw={1.300}>{art}</Svg>
        </button>
      ))}
      <div className="mt-1.5 h-px w-[49px] bg-[#ccc]" />
      <button className="mt-auto flex h-[15px] w-full shrink-0 items-center justify-center bg-[#b4b8c1]" aria-label="更多工具">
        <Svg w={8} h={5} sw={1}><path d="M0 0l4 4 4-4" /></Svg>
      </button>
    </div>
  );
}

/* ---------- status bar ---------- */

const Sep = ({ className = "" }) => <span className={"h-[30px] w-px shrink-0 bg-[#dcdcdc] " + className} />;

function BookIcon() {
  return (
    <Svg w={20} h={18} className="text-[#888]">
      <path d="M10 3C8 1 4 1 1 2v14h8M10 3c2-2 6-2 9-1v14h-8" />
      <path d="M10 8l4 5M14 8l-4 5" stroke="#333" />
    </Svg>
  );
}

const views = [
  ["全屏", <path d="M1 6V1h5M14 1h5v5M19 14v5h-5M6 19H1v-5M12 8l6-6M8 12l-6 6M14 2h4v4M2 14v4h4" strokeWidth="1.200" />],
  ["阅读", <path d="M10 4v15M10 4C9 2 7 2 1 2v15c5 0 8 0 9 1 1-1 4-1 9-1V2c-6 0-8 0-9 2z" />],
  ["写作", <path d="M1 19h18M3 15l2-5 9-8c2-1 4 1 3 3l-9 9zM12 4l3 3" />],
  ["页面", <g><path d="M2 1h11l5 5v13H2zM6 9h8M6 13h8" /><path d="M13 1v5h5z" fill="currentColor" /></g>],
  ["大纲", <path d="M1 1h18v18H1zM5 6h1M9 6h7M5 10h1M9 10h7M5 14h1M9 14h7" />],
  ["Web", <g><circle cx="10" cy="10" r="9" /><ellipse cx="10" cy="10" rx="4" ry="9" /><path d="M1 10h18M2 6h16M2 14h16" strokeWidth="1" /></g>],
  ["护眼", <g><path d="M1 13c4-7 14-7 18 0-4 7-14 7-18 0zM10 1v3M2 3l2 3M18 3l-2 3" /><circle cx="10" cy="13" r="3.500" /></g>],
];

function StatusBar() {
  return (
    <footer className="flex h-9 shrink-0 items-center whitespace-nowrap border-t border-[#dedede] bg-[#f4f4f4] text-[15px] text-[#555]">
      <span className="w-[61px] pl-2">页码: 3</span><Sep />
      <span className="w-[76px] pl-2.5">页面: 3/5</span><Sep />
      <span className="w-[69px] pl-2.5">节: 1/1</span>
      <span className="w-[120px]">设置值: 18.4厘米</span><Sep />
      <span className="w-[66px] pl-3">行: 15</span>
      <span className="w-[45px]">列: 1</span><Sep />
      <span className="w-[88px] pl-2.5">字数: 1094</span><Sep />
      <button className="flex w-[104px] items-center gap-1 pl-2.5"><BookIcon />拼写检查</button><Sep />
      <button className="flex w-[104px] items-center gap-1 pl-2.5"><BookIcon />文档校对</button><Sep />
      <button className="flex items-center gap-1 pl-3.5 text-[#222]">
        <Svg w={18} h={20} className="text-[#666]"><path d="M9 1l8 3v6c0 5-4 8-8 9-4-1-8-4-8-9V4zM6 7l6 6M12 7l-6 6" /></Svg>
        文档未保护
      </button>
      <div className="flex-1" />
      {views.map(([name, art], i) => (
        <button key={name} aria-label={name} className={"mr-[3px] flex h-[30px] w-[29px] items-center justify-center rounded-md text-[#4a4a4a] " + (i === 3 ? "bg-[#c5c5c5]" : "")}>
          <Svg w={20} h={20}>{art}</Svg>
        </button>
      ))}
      <Sep className="ml-1" />
      <button className="ml-3 flex items-center gap-1.5 text-[#777]">100% <Caret /></button>
      <button className="ml-3" aria-label="缩小"><Svg w={16} h={16} sw={3}><path d="M1 8h14" strokeLinecap="butt" /></Svg></button>
      <input
        type="range"
        aria-label="显示比例"
        min="0"
        max="100"
        defaultValue="50"
        className="ml-3 h-4 w-[172px] appearance-none bg-transparent [&::-webkit-slider-runnable-track]:h-px [&::-webkit-slider-runnable-track]:bg-[#8a8a8a] [&::-webkit-slider-thumb]:-mt-2 [&::-webkit-slider-thumb]:size-4 [&::-webkit-slider-thumb]:appearance-none [&::-webkit-slider-thumb]:rounded-full [&::-webkit-slider-thumb]:border-2 [&::-webkit-slider-thumb]:border-[#6a6a6a] [&::-webkit-slider-thumb]:bg-[#f4f4f4]"
      />
      <button className="ml-3.5" aria-label="放大"><Svg w={16} h={16} sw={2.500}><path d="M1 8h14M8 1v14" strokeLinecap="butt" /></Svg></button>
      <button className="ml-4 mr-[19px]" aria-label="适合窗口">
        <Svg w={16} h={16} sw={1.800}><path d="M1 5V1h4M11 1h4v4M15 11v4h-4M5 15H1v-4M8 8v.1" /></Svg>
      </button>
    </footer>
  );
}

/* ---------- desktop taskbar ---------- */

function TaskApp({ label, active, children }) {
  return (
    <button aria-label={label} className={"relative flex h-full w-[62px] items-center justify-center " + (active ? "bg-[#3e4145]" : "")}>
      {children}
      <span className={"absolute bottom-0 h-[3px] bg-[#76b9ed] " + (active ? "w-full" : "w-[51px]")} />
    </button>
  );
}

function Taskbar() {
  return (
    <div className="relative flex h-[50px] shrink-0 items-center bg-[#101116] text-white">
      <button className="flex w-[60px] justify-center" aria-label="开始菜单">
        <Svg w={20} h={20}>
          <path d="M0 3l8-1v7H0zM9 2l11-2v9H9zM0 10h8v8l-8-1zM9 10h11v10L9 18z" fill="#fff" stroke="none" />
        </Svg>
      </button>
      <label className="flex h-full w-[430px] shrink-0 items-center bg-[#f1f1f1] pl-[11px] pr-[17px] text-[#222]">
        <span className="size-[27px] shrink-0 rounded-full border-4 border-[#111]" />
        <input aria-label="搜索" placeholder="在这里输入你要搜索的内容" className="ml-3 min-w-0 flex-1 bg-transparent text-[19px] placeholder:text-[#333] focus:outline-none" />
        <Svg w={18} h={22} sw={1.600}>
          <rect x="5.500" y="1" width="7" height="14" rx="1" /><path d="M2 12v3c0 2 1 3 3 3h8c2 0 3-1 3-3v-3M9 18v3M6 21h6" />
        </Svg>
      </label>
      <button className="ml-[11px] flex w-[38px] justify-center" aria-label="任务视图">
        <Svg w={22} h={20} sw={1.400}><path d="M1 0v3h12V0M1 6h12v9H1zM1 20v-3h12v3M19 0v5M19 11v9" strokeLinecap="butt" /><path d="M17.500 7h3.500v2h-3.500z" fill="#fff" stroke="none" /></Svg>
      </button>
      <div className="ml-3.5 flex h-full">
        <TaskApp label="文件资源管理器">
          <Svg w={28} h={24}>
            <path d="M1 1h11l2 3h13v19H1z" fill="#fbc93b" stroke="none" />
            <path d="M0 5h14l2-3h12v21H0z" fill="#ffe596" stroke="none" />
            <path d="M5 24V14c0-1 1-2 2-2h14c1 0 2 1 2 2v10h-4v-7H9v7z" fill="#38b4e6" stroke="none" />
          </Svg>
        </TaskApp>
        <TaskApp label="微信">
          <Svg w={30} h={26}>
            <path d="M11 1C5 1 0 5 0 10c0 3 2 5 4 7l-1 3 4-2c1 0 3 1 5 1 6 0 10-4 10-9S17 1 11 1z" fill="#7bd43c" stroke="none" />
            <path d="M21 9c-5 0-9 3-9 7s4 7 9 7l3-1 3 2-1-3c2-1 4-3 4-5 0-4-4-7-9-7z" fill="#ececec" stroke="none" />
            <path d="M7.500 7v.1M15 7v.1" stroke="#2f5d1d" strokeWidth="2.500" />
            <path d="M18 14v.1M24 14v.1" stroke="#666" strokeWidth="2" />
          </Svg>
        </TaskApp>
        <TaskApp label="Edge">
          <Svg w={26} h={28}>
            <path d="M1 12C2 5 7 1 13 1c8 0 12 5 12 12v3H9c0 5 4 7 8 7 3 0 5-1 7-2v5c-2 1-5 2-8 2-8 0-12-5-12-11 0-4 3-8 6-9-4 0-7 2-9 4zM9 11h9c0-6-8-6-9 0z" fill="#0b7ad9" fillRule="evenodd" stroke="none" />
          </Svg>
        </TaskApp>
        <TaskApp label="WPS" active>
          <Svg w={28} h={28} sw={2.400}>
            <rect x="1" y="1" width="26" height="26" rx="4" fill="#2f86f6" stroke="none" />
            <path d="M6 9h4l2 10 6-10h-4l1 10 1 0 6-10M6 9l4 10h2" stroke="#fff" strokeWidth="2" />
          </Svg>
        </TaskApp>
        <TaskApp label="HBuilder">
          <Svg w={26} h={30} sw={2.400}>
            <path d="M0 0h26l-2 27-11 3-11-3z" fill="#22a339" stroke="none" />
            <path d="M7 7v14M19 7v14M7 14h12" stroke="#fff" strokeLinecap="butt" />
          </Svg>
        </TaskApp>
      </div>
      <div className="flex-1" />
      <button aria-label="显示隐藏的图标"><Svg w={16} h={10} sw={1.500}><path d="M1 9l7-7 7 7" /></Svg></button>
      <Svg w={20} h={14} sw={1.200} className="ml-3"><path d="M7 2h11v10H4V9" /><path d="M8 4h8v6H6V7z" fill="#fff" stroke="none" /><path d="M19.500 5v4M1 1v3c0 3 4 3 4 0V1M3 6v5" /></Svg>
      <Svg w={22} h={18} className="ml-2.5"><path d="M1 6h3l5-4v14l-5-4H1zM12 6c1 2 1 4 0 6" /><path d="M15 3c3 4 3 8 0 12M18 1c4 5 4 11 0 16" stroke="#888" /></Svg>
      <Svg w={18} h={18} className="ml-2.5"><path d="M5 17C5 11 9 7 16 6M1 15C1 8 7 3 14 2M9 17c0-4 3-7 8-7M14 17c0-2 1-3 3-3" /></Svg>
      <span className="ml-2.5 text-[18px]">英</span>
      <span className="ml-[18px] flex size-[18px] items-center justify-center bg-white text-[16px] leading-none text-black">拼</span>
      <div className="ml-[17px] flex w-[84px] flex-col items-center text-[15px] leading-[23px]">
        <span>19:53</span>
        <span>2019/12/15</span>
      </div>
      <button className="relative ml-[21px] mr-[31px]" aria-label="通知">
        <Svg w={20} h={20}><path d="M0 0h20v16h-7l-3 4v-4H0z" fill="#fff" stroke="none" /><path d="M4 5h12M4 8h12M4 11h8" stroke="#101116" strokeWidth="1.300" strokeLinecap="butt" /></Svg>
        <span className="absolute -right-2.5 top-2 flex size-5 items-center justify-center rounded-full border border-[#888] bg-[#2c2c30] text-[15px] font-bold">1</span>
      </button>
      <span className="absolute right-[5px] h-full w-px bg-[#555]" />
      <span className="pointer-events-none absolute bottom-2 right-2 text-[16px] leading-5 text-[#c8c8c8]/75 font-['Liberation_Sans']">https://blog.csdn.net/qq_46028131</span>
    </div>
  );
}

export default function App() {
  return (
    <div className="flex h-screen w-full flex-col overflow-hidden bg-[#f4f4f4] font-['Open_Sans','Noto_Sans_CJK_SC',sans-serif]">
      <TitleBar />
      <MenuRow />
      <Ribbon />
      <div className="flex min-h-0 flex-1">
        <Document />
        <ScrollColumn />
        <StylesPanel />
        <ToolStrip />
      </div>
      <StatusBar />
      <Taskbar />
    </div>
  );
}
